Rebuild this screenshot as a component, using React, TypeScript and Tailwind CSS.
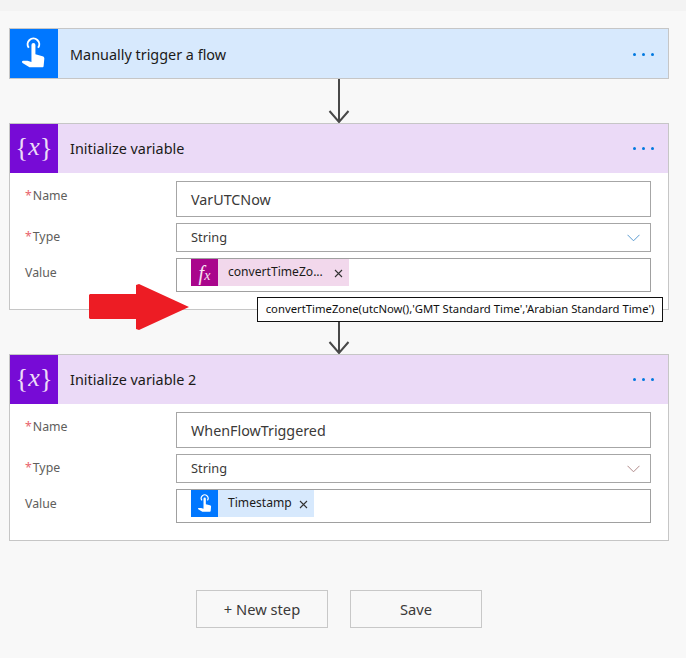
const font = { fontFamily: '"Noto Sans", "Open Sans", sans-serif' };

function Hand({ size }: { size: number }) {
  return (
    <svg width={size} height={size} viewBox="0 0 24 24" fill="none">
      <path d="M8.3 7.6a4.1 4.1 0 1 1 6.6 0" stroke="#fff" strokeWidth="1.4" />
      <path
        d="M10.2 5.6a1.4 1.4 0 0 1 2.8 0v6.6l5 1.3c.8.2 1.3.8 1.3 1.6l-.5 5.3c0 .6-.4 1-1 1H8.8L3.9 18.3c-.7-.5-.4-1.5.5-1.5h3l2.8 .9z"
        fill="#fff"
      />
    </svg>
  );
}

function Dots({ blue }: { blue: boolean }) {
  return (
    <div className={blue ? 'mr-[14px] mt-[2px] flex gap-[6px]' : 'mr-[14px] mt-[.5px] flex gap-[6px]'}>
      <span className="h-[3px] w-[3px] rounded-full bg-[#0078e0]" />
      <span className="h-[3px] w-[3px] rounded-full bg-[#0078e0]" />
      <span className="h-[3px] w-[3px] rounded-full bg-[#0078e0]" />
    </div>
  );
}

function Header({ tone, title, icon }: { tone: 'blue' | 'purple'; title: string; icon: React.ReactNode }) {
  const blue = tone === 'blue';
  return (
    <div className={blue ? 'flex h-[49px] items-center bg-[#d7e9fd]' : 'flex h-[48.5px] items-center bg-[#ebdaf7]'}>
      <div className={blue ? 'flex h-full w-[48px] items-center justify-center bg-[#0077ff]' : 'flex h-full w-[48px] items-center justify-center bg-[#770bd6]'}>
        {icon}
      </div>
      <div className={blue ? 'ml-3 flex-1 pt-[3px] text-[14.4px] text-[#1b1a19]' : 'ml-3 flex-1 pt-[1px] text-[14.4px] text-[#1b1a19]'}>{title}</div>
      <Dots blue={blue} />
    </div>
  );
}

function VarIcon() {
  return (
    <span className="flex items-center text-[#ecdcf8] text-[27px] leading-none" style={{ fontFamily: '"Liberation Serif", serif' }}>
      <span className="font-light">{'{'}</span>
      <span className="pb-[3px] italic text-[26px]">x</span>
      <span className="font-light">{'}'}</span>
    </span>
  );
}

function Label({ text, required }: { text: string; required?: boolean }) {
  return (
    <div className="flex w-[166px] shrink-0 items-start pl-[15px] pt-[6.5px] text-[12.3px] leading-[16px] text-[#605e5c]">
      {required && <span className="mr-[1px] text-[#e8636b]">*</span>}
      <span>{text}</span>
    </div>
  );
}

function Chip({ tone, text }: { tone: 'fx' | 'hand'; text: string }) {
  const fx = tone === 'fx';
  return (
    <div className={fx ? 'ml-[14px] flex h-[27px] w-[158px] items-center bg-[#f2d8ec]' : 'ml-[14px] flex h-[27px] w-[123px] items-center bg-[#d7e9fd]'}>
      <div className={fx ? 'flex h-full w-[27px] items-center justify-center bg-[#a9058c]' : 'flex h-full w-[27px] items-center justify-center bg-[#0077ff]'}>
        {fx ? (
          <span className="text-[20px] italic leading-none text-[#f8e6f4]" style={{ fontFamily: '"Liberation Serif", serif' }}>
            f<span className="text-[14px]">x</span>
          </span>
        ) : (
          <Hand size={20} />
        )}
      </div>
      <span className="ml-[10px] text-[12.1px] text-[#1b1a19]">{text}</span>
      <svg className={fx ? 'ml-[11px] mt-[2px]' : 'ml-[7px] mt-[2px]'} width="9" height="9" viewBox="0 0 9 9" stroke="#333" strokeWidth="1.1">
        <path d="M1 1l7 7M8 1l-7 7" />
      </svg>
    </div>
  );
}

function VarCard({ title, name, chevron, chip }: { title: string; name: string; chevron: string; chip: React.ReactNode }) {
  return (
    <div className="h-[187px] border border-[#c6c6c6] bg-white">
      <Header tone="purple" title={title} icon={<VarIcon />} />
      <div className="flex flex-col gap-[6px] pr-[17px] pt-[8.5px]">
        <div className="flex">
          <Label text="Name" required />
          <div className="flex h-[35.5px] flex-1 items-center border border-[#a6a6a6] pl-[14px] pt-[1px] text-[14.3px] text-[#3b3a39]">{name}</div>
        </div>
        <div className="flex">
          <Label text="Type" required />
          <div className="flex h-[29.5px] flex-1 items-center justify-between border border-[#a6a6a6] pl-[14px] pr-[10px] pt-[1px] text-[12.8px] text-[#3b3a39]">
            <span>String</span>
            <svg width="13" height="8" viewBox="0 0 13 8" fill="none" stroke={chevron} strokeWidth="1">
              <path d="M.5.8l6 6 6-6" />
            </svg>
          </div>
        </div>
        <div className="flex">
          <Label text="Value" />
          <div className="flex h-[33.5px] flex-1 items-start border border-[#a0a0a0]">{chip}</div>
        </div>
      </div>
    </div>
  );
}

function Connector({ h }: { h: number }) {
  return (
    <div className="flex justify-center">
      <svg width="24" height={h} viewBox={`0 0 24 ${h}`} fill="none" stroke="#484848" strokeWidth="2">
        <path d={`M12 0V${h - 1}M2.5 ${h - 12}l9.5 11 9.5-11`} />
      </svg>
    </div>
  );
}

export default function App() {
  return (
    <div className="relative h-[658px] w-[686px] overflow-hidden bg-[#f8f8f8]" style={font}>
      <div className="h-[11px] bg-[#f3f3f3]" />
      <div className="ml-[9px] mr-[17px] pt-[17px]">
        <div className="h-[51px] border border-[#c6c6c6]">
          <Header tone="blue" title="Manually trigger a flow" icon={<Hand size={34} />} />
        </div>
        <Connector h={44} />
        <VarCard title="Initialize variable" name="VarUTCNow" chevron="#5b9bd0" chip={<Chip tone="fx" text="convertTimeZo..." />} />
        <Connector h={44} />
        <VarCard title="Initialize variable 2" name="WhenFlowTriggered" chevron="#b08a8a" chip={<Chip tone="hand" text="Timestamp" />} />
      </div>
      <div className="mt-[49px] flex gap-[22px] pl-[196px]">
        <button className="h-[38px] w-[132px] border border-[#c8c8c8] text-[14.7px] text-[#3b3a39]">+ New step</button>
        <button className="h-[38px] w-[132px] border border-[#c8c8c8] text-[14.7px] text-[#3b3a39]">Save</button>
      </div>

      <svg className="absolute left-[89px] top-[284px]" width="101" height="46" viewBox="0 0 101 46" fill="#ed1c24">
        <path d="M1 10H47V1L50 0L100 23L50 46L47 45V35H1L0 34V11z" />
      </svg>
      <div className="absolute left-[257px] top-[297px] flex h-[25px] w-[406px] items-center justify-center whitespace-nowrap border border-[#111] bg-white text-[11.3px] text-[#111]">
        convertTimeZone(utcNow(),'GMT Standard Time','Arabian Standard Time')
      </div>
    </div>
  );
}
